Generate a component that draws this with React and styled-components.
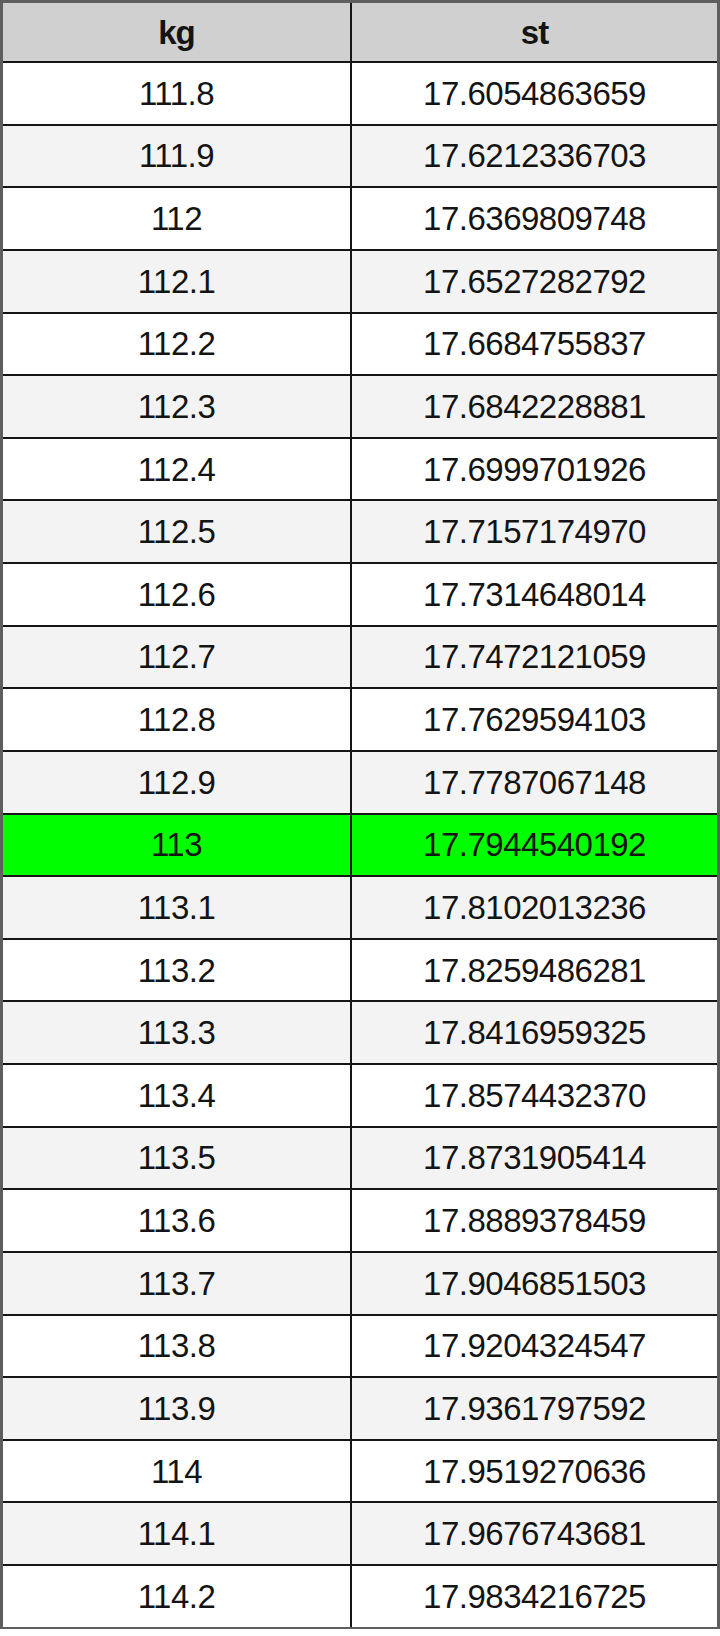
import React from "react";
import styled, {createGlobalStyle} from "styled-components";

let Global = createGlobalStyle`
    body {
        margin: 0;
        background: #ffffff;
        font-family: "Liberation Sans", Arial, sans-serif;
    }
`

let Table = styled.div`
    width: 720px;
    box-sizing: border-box;
    border: 3px solid #5e5e5e;
    border-bottom-width: 2px;
    display: flex;
    flex-direction: column;
`
let Row = styled.div`
    display: grid;
    grid-template-columns: 349px 1fr;
    box-sizing: border-box;
    height: ${(props) => props.$head ? "60px" : "62.64px"};
    border-bottom: 2px solid #151515;
    background: ${(props) =>
        props.$head ? "#d0d0d0" :
        props.$hit ? "#00fe00" :
        props.$odd ? "#f3f3f3" : "#ffffff"};
    &:last-child {
        border-bottom: none;
        height: 60.64px;
    }
`
let Cell = styled.div`
    display: flex;
    align-items: center;
    justify-content: center;
    padding-top: 1px;
    font-size: 33px;
    font-weight: ${(props) => props.$head ? "bold" : "normal"};
    color: #141414;
    letter-spacing: ${(props) => props.$head ? "-1px" : "-0.5px"};
    &:first-child {
        border-right: 2px solid #151515;
    }
`

let data = [
    ["111.8", "17.6054863659"],
    ["111.9", "17.6212336703"],
    ["112", "17.6369809748"],
    ["112.1", "17.6527282792"],
    ["112.2", "17.6684755837"],
    ["112.3", "17.6842228881"],
    ["112.4", "17.6999701926"],
    ["112.5", "17.7157174970"],
    ["112.6", "17.7314648014"],
    ["112.7", "17.7472121059"],
    ["112.8", "17.7629594103"],
    ["112.9", "17.7787067148"],
    ["113", "17.7944540192"],
    ["113.1", "17.8102013236"],
    ["113.2", "17.8259486281"],
    ["113.3", "17.8416959325"],
    ["113.4", "17.8574432370"],
    ["113.5", "17.8731905414"],
    ["113.6", "17.8889378459"],
    ["113.7", "17.9046851503"],
    ["113.8", "17.9204324547"],
    ["113.9", "17.9361797592"],
    ["114", "17.9519270636"],
    ["114.1", "17.9676743681"],
    ["114.2", "17.9834216725"],
]

export default function App() {
    return (
        <>
            <Global/>
            <Table>
                <Row $head>
                    <Cell $head>kg</Cell>
                    <Cell $head>st</Cell>
                </Row>
                {data.map(([kg, st], i) => (
                    <Row key={kg} $odd={i % 2 === 1} $hit={kg === "113"}>
                        <Cell>{kg}</Cell>
                        <Cell>{st}</Cell>
                    </Row>
                ))}
            </Table>
        </>
    );
}
